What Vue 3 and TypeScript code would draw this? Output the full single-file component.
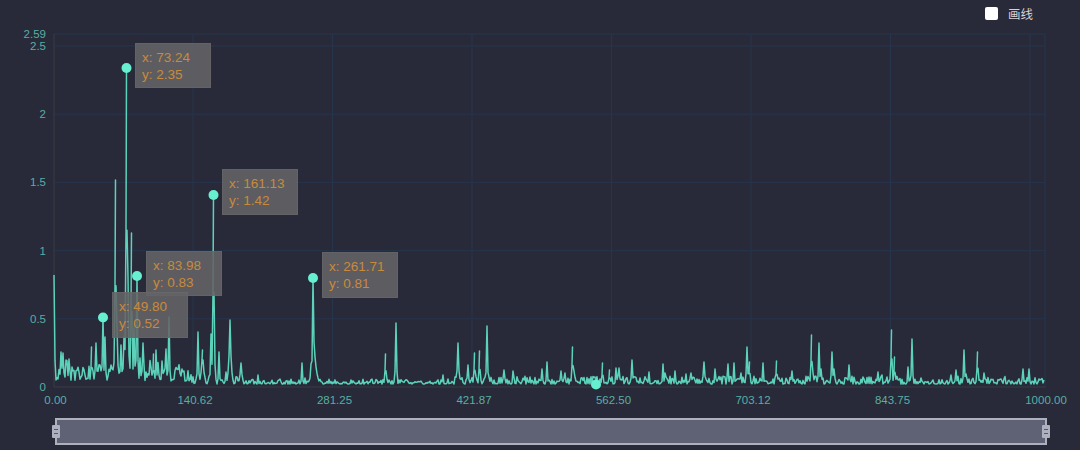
<!-- 频谱折线图：带标注点和底部缩放条 -->
<script setup lang="ts">
import { computed } from 'vue'

const X0 = 54
const X1 = 1046
const Y0 = 387
const PX_PER_UNIT = 136.4
const TOP = 28

// 主要峰值 [x像素, 高度像素, 衰减宽度]
const peaks: number[][] = [
  [54, 112, 0.5], [61, 35, 1], [63, 34, 1], [66, 27, 1], [69, 28, 0.8], [72, 20, 0.8], [76, 12, 0.6], [81, 10, 0.6],
  [91.5, 40, 0.5], [96, 44, 0.5], [100, 22, 0.5], [103, 70, 0.5], [105, 50, 0.8], [111, 22, 1], [115.5, 207, 0.5],
  [117, 60, 1], [121, 42, 1], [124, 50, 1], [126.5, 320, 0.6], [128, 110, 0.8], [131.5, 154, 0.5], [134, 60, 0.6],
  [137, 111, 0.6], [143, 44, 1], [153.5, 33, 0.5], [156, 37, 0.5], [166, 38, 0.6], [169, 70, 0.6],
  [184, 16, 1], [198, 55, 0.5], [202.5, 37, 1.6], [211, 53, 0.7], [213.5, 193, 0.6], [219, 35, 0.7], [226, 15, 1],
  [230, 67, 1.3], [241, 24, 1.5], [258, 12, 0.5], [302, 24, 0.5], [311, 23, 0.5], [313, 109, 0.6], [314, 45, 2.5],
  [385.5, 33, 0.5], [396, 64, 0.5], [443, 12, 0.5], [458, 44, 1], [468, 22, 0.8], [474.5, 34, 0.5], [479.5, 36, 0.6],
  [487, 61, 0.6], [504, 17, 1.4], [513, 16, 0.6], [530, 10, 1], [542, 18, 1], [547, 25, 0.6], [561, 16, 1.2], [565, 14, 1],
  [572.5, 40, 0.8], [574, 16, 2], [602.5, 24, 0.5], [609.5, 17, 0.8], [616, 19, 0.5], [619, 19, 0.5], [632, 27, 0.6],
  [649, 15, 0.6], [663, 23, 0.6], [665, 14, 1.2], [675, 16, 0.6], [686, 13, 0.5], [691, 14, 0.5], [704, 25, 1.2], [715, 18, 0.6],
  [721, 10, 0.5], [728, 23, 0.5], [734, 24, 0.5], [741, 14, 0.5], [747, 40, 0.9], [749.5, 25, 0.8], [763, 24, 0.5],
  [776.5, 26, 0.5], [792, 16, 1], [811.5, 52, 0.5], [813, 14, 1.5], [819, 44, 0.5], [821, 18, 1.2], [832, 35, 0.9], [834, 18, 1.4],
  [849, 22, 0.5], [863, 10, 0.8], [878, 15, 1], [882, 12, 0.7], [891.5, 57, 0.5], [894.5, 30, 0.5], [908, 20, 0.7],
  [912, 48, 0.7], [921, 9, 1], [951, 12, 0.6], [956, 17, 1], [964, 37, 0.5], [966, 13, 1.4], [977.5, 35, 0.8], [984, 14, 0.9],
  [1005, 8, 1.2], [1023, 18, 0.5], [1029, 18, 0.5], [1040, 7, 1.4],
]

// 固定种子，每次出图一致
let seed = 20731
function rand(): number {
  seed = (seed * 16807) % 2147483647
  return seed / 2147483647
}

function noiseAt(x: number): number {
  const quiet = (x > 240 && x < 300) || (x > 900 && x < 950) || (x > 320 && x < 450)
  const busy = x < 192 ? 14 : quiet ? 5 : 8
  const floor = x < 192 ? 6 : 3
  const r = rand()
  return floor + r * r * busy + (x < 190 && rand() > 0.65 ? rand() * 12 : 0)
}

const points = computed(() => {
  const out: string[] = []
  for (let x = X0; x <= 1044; x++) {
    let h = noiseAt(x)
    for (const [px, ph, w] of peaks) {
      const v = ph * Math.exp(-Math.abs(x - px) / Math.max(w, 0.7))
      if (v > h) h = v
    }
    // 尖峰落在整数像素之外时补一个精确点
    for (const [px, ph] of peaks) {
      if (Math.floor(px) === x && px !== x) out.push(`${x},${Y0 - h}`, `${px},${Y0 - ph}`)
    }
    out.push(`${x},${Y0 - h}`)
  }
  return out.join(' ')
})

const yTicks = [
  { label: '2.59', y: 34 },
  { label: '2.5', y: 46 },
  { label: '2', y: Y0 - 2 * PX_PER_UNIT },
  { label: '1.5', y: Y0 - 1.5 * PX_PER_UNIT },
  { label: '1', y: Y0 - PX_PER_UNIT },
  { label: '0.5', y: Y0 - 0.5 * PX_PER_UNIT },
]

const xLabels = ['0.00', '140.62', '281.25', '421.87', '562.50', '703.12', '843.75', '1000.00']
const xTicks = xLabels.map((label, i) => ({ label, x: X0 + i * 139.5 }))

const markers = [
  { x: 126.5, y: 68 },
  { x: 213.5, y: 195 },
  { x: 137, y: 276 },
  { x: 103, y: 317.5 },
  { x: 313, y: 278 },
  { x: 596, y: 384.5 },
]

const tips = [
  { left: 322, top: 252, x: '261.71', y: '0.81' },
  { left: 146, top: 250.5, x: '83.98', y: '0.83' },
  { left: 112, top: 292, x: '49.80', y: '0.52' },
  { left: 222, top: 169, x: '161.13', y: '1.42' },
  { left: 135, top: 42.5, x: '73.24', y: '2.35' },
]
</script>

<template>
  <div class="page">
    <div class="toolbar">
      <label class="draw-toggle">
        <input type="checkbox" class="draw-check" />
        <span>画线</span>
      </label>
    </div>

    <div class="plot">
      <svg class="plot-svg" viewBox="0 28 1080 378" width="1080" height="378">
        <g class="grid">
          <line v-for="t in yTicks" :key="t.label" :x1="X0" :x2="X1 - 1" :y1="t.y" :y2="t.y" />
          <line v-for="t in xTicks.slice(1, 7)" :key="t.label" :x1="t.x - 0.5" :x2="t.x - 0.5" y1="34" :y2="Y0" />
          <line x1="1030" x2="1030" y1="34" :y2="Y0" />
          <line x1="1045" x2="1045" y1="34" :y2="Y0" />
        </g>
        <line class="axis" :x1="X0" :x2="X1" :y1="Y0" :y2="Y0" />
        <line class="axis" :x1="X0" :x2="X0" y1="34" :y2="Y0" />

        <text v-for="t in yTicks" :key="t.label" class="tick" x="46" :y="t.y + 4" text-anchor="end">{{ t.label }}</text>
        <text class="tick" x="46" :y="Y0 + 4" text-anchor="end">0</text>
        <text
          v-for="(t, i) in xTicks"
          :key="t.label"
          class="tick"
          :x="i === 7 ? 1046 : t.x + 1.5"
          y="404"
          text-anchor="middle"
        >{{ t.label }}</text>

        <polyline class="series" :points="points" />
        <circle v-for="m in markers" :key="m.x" class="marker" :cx="m.x" :cy="m.y" r="5" />
      </svg>

      <div
        v-for="t in tips"
        :key="t.x"
        class="tip"
        :style="{ left: `${t.left}px`, top: `${t.top - TOP}px` }"
      >
        <div>x: {{ t.x }}</div>
        <div>y: {{ t.y }}</div>
      </div>
    </div>

    <div class="zoom-bar">
      <span class="handle handle-left"><i></i><i></i></span>
      <span class="handle handle-right"><i></i><i></i></span>
    </div>
  </div>
</template>

<style scoped>
.page {
  width: 1080px;
  height: 450px;
  background: #282a3a;
  display: flex;
  flex-direction: column;
  overflow: hidden;
  font-family: "Liberation Sans", "Noto Sans CJK SC", sans-serif;
}

.toolbar {
  height: 28px;
  flex: none;
  display: flex;
  justify-content: flex-end;
  padding-right: 47px;
}

.draw-toggle {
  display: flex;
  align-items: center;
  gap: 10px;
  height: 27px;
  color: #d4d5da;
  font-size: 12.5px;
  font-family: "Noto Sans CJK SC", sans-serif;
}

.draw-check {
  appearance: none;
  width: 13px;
  height: 13px;
  margin: 0;
  background: #fff;
  border-radius: 2px;
}

.plot {
  position: relative;
  height: 378px;
  flex: none;
}

.plot-svg {
  display: block;
}

.grid line {
  stroke: #26344c;
  stroke-width: 1;
}

.axis {
  stroke: #383a42;
  stroke-width: 1;
}

.tick {
  fill: #5aaea2;
  font-size: 11.5px;
}

.series {
  fill: none;
  stroke: #5cd2ba;
  stroke-width: 1.5;
  stroke-linejoin: round;
}

.marker {
  fill: #66f0d0;
}

.tip {
  position: absolute;
  width: 75.5px;
  height: 45.5px;
  box-sizing: border-box;
  padding: 5px 6px;
  background: rgba(100, 100, 102, 0.88);
  border: 1px solid rgba(112, 112, 114, 0.3);
  color: #c98a3c;
  font-size: 13.5px;
  line-height: 17px;
  white-space: nowrap;
}

.zoom-bar {
  position: relative;
  flex: none;
  height: 27px;
  margin: 12px 33px 0 55px;
  box-sizing: border-box;
  background: #5f6275;
  border: 2px solid #aeb0bd;
}

.handle {
  position: absolute;
  top: 5px;
  width: 8px;
  height: 13px;
  background: #aeb0c0;
  border-radius: 1px;
  display: flex;
  flex-direction: column;
  justify-content: center;
  gap: 3px;
  padding-left: 2px;
  box-sizing: border-box;
}

.handle i {
  display: block;
  width: 4px;
  height: 1px;
  background: #55586a;
}

.handle-left {
  left: -5px;
}

.handle-right {
  right: -5px;
}
</style>

<style>
html,
body {
  background: #282a3a;
}
</style>
